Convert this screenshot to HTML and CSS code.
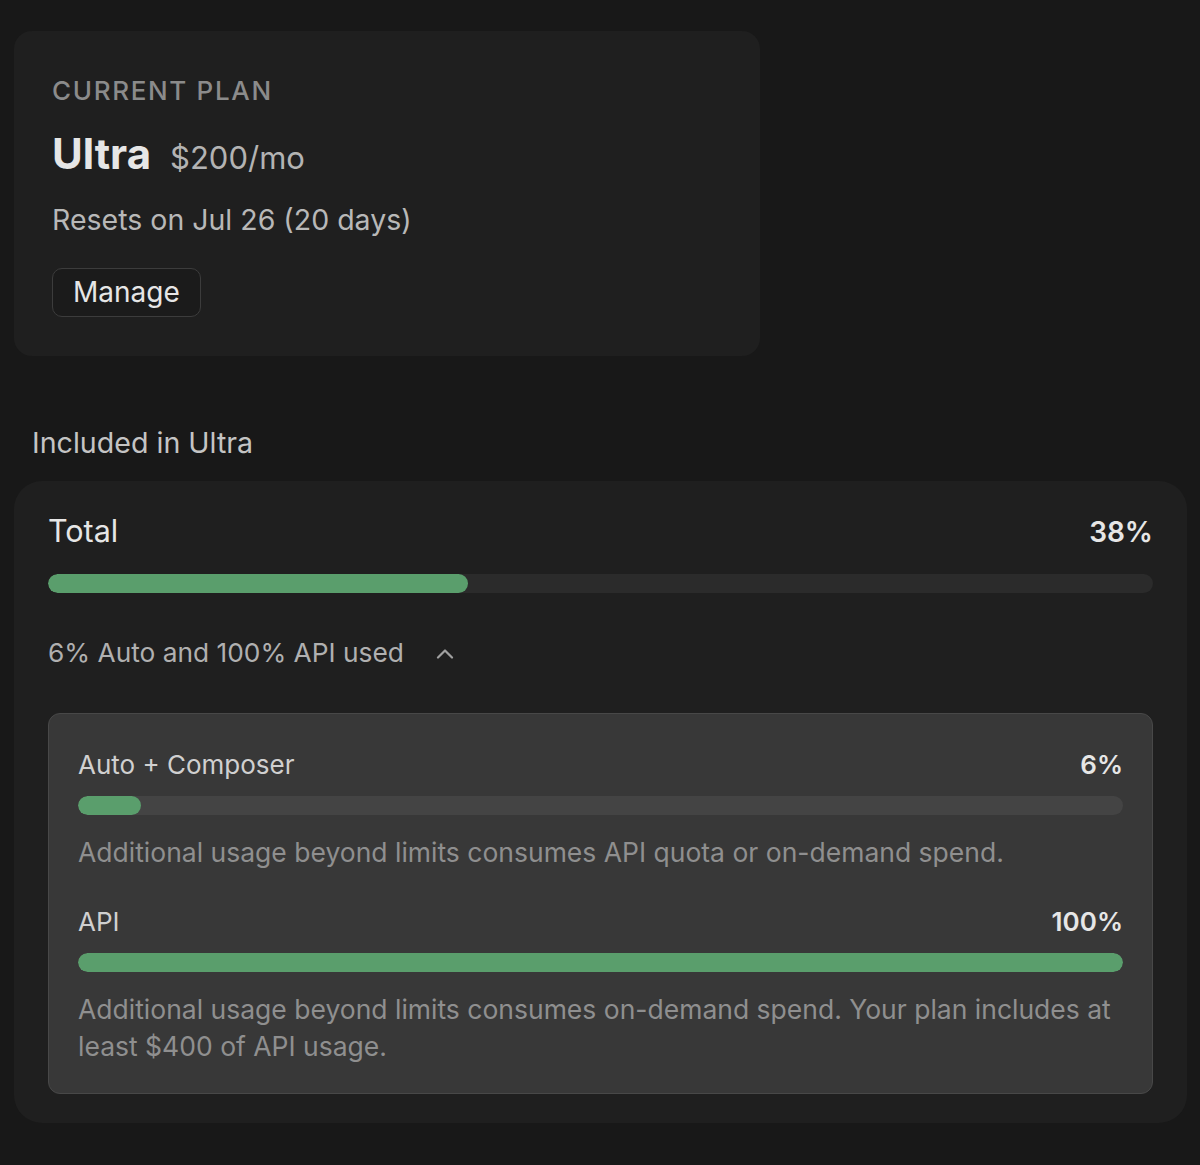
FILE: index.html
```html
<!DOCTYPE html>
<html lang="en">
<head>
  <meta charset="UTF-8" />
  <meta name="viewport" content="width=device-width, initial-scale=1" />
  <title>Usage</title>
  <link rel="stylesheet" href="styles.css">
</head>
<body>
  <main class="page">
    <section class="plan-card">
      <div class="plan-label">CURRENT PLAN</div>
      <div class="plan-title">
        <span class="plan-name">Ultra</span>
        <span class="plan-price">$200/mo</span>
      </div>
      <p class="plan-reset">Resets on Jul 26 (20 days)</p>
      <button class="manage-btn">Manage</button>
    </section>

    <h2 class="section-title">Included in Ultra</h2>

    <section class="usage-card">
      <div class="usage-head">
        <span class="usage-name">Total</span>
        <span class="usage-pct">38%</span>
      </div>
      <div class="bar"><div class="bar-fill" style="width: 38%"></div></div>

      <button class="breakdown-toggle">
        <span>6% Auto and 100% API used</span>
        <svg class="chevron" width="18" height="11" viewBox="0 0 18 11" fill="none">
          <path d="M2 9.5 L9 2.5 L16 9.5" stroke="currentColor" stroke-width="2.2" stroke-linecap="round" stroke-linejoin="round"/>
        </svg>
      </button>

      <div class="breakdown">
        <div class="meter">
          <div class="meter-head">
            <span>Auto + Composer</span>
            <span class="meter-pct">6%</span>
          </div>
          <div class="bar bar-inner"><div class="bar-fill" style="width: 6%"></div></div>
          <p class="meter-note">Additional usage beyond limits consumes API quota or on-demand spend.</p>
        </div>
        <div class="meter">
          <div class="meter-head">
            <span>API</span>
            <span class="meter-pct">100%</span>
          </div>
          <div class="bar bar-inner"><div class="bar-fill" style="width: 100%"></div></div>
          <p class="meter-note">Additional usage beyond limits consumes on-demand spend. Your plan includes at least $400 of API usage.</p>
        </div>
      </div>
    </section>
  </main>
</body>
</html>
```

FILE: styles.css
```css
html, body {
  margin: 0;
  padding: 0;
  background: #181818;
  color: #e4e4e4;
  font-family: Inter, "Noto Sans", sans-serif;
}

.page {
  padding: 31px 13px 40px 14px;
}

.plan-card {
  width: 746px;
  box-sizing: border-box;
  background: #1f1f1f;
  border-radius: 18px;
  padding: 44px 38px 39px 38px;
}

.plan-label {
  font-size: 26px;
  line-height: 32px;
  letter-spacing: 0.064em;
  color: #8b8b8b;
  font-weight: 500;
}

.plan-title {
  display: flex;
  align-items: baseline;
  gap: 19px;
  margin-top: 21px;
}

.plan-name {
  font-size: 42px;
  line-height: 52px;
  font-weight: 700;
  color: #e6e6e6;
}

.plan-price {
  font-size: 31px;
  color: #b3b3b3;
}

.plan-reset {
  margin: 22px 0 0;
  font-size: 28.5px;
  line-height: 36px;
  color: #b8b8b8;
}

.manage-btn {
  display: block;
  margin-top: 30px;
  height: 49px;
  padding: 0 20px;
  background: #1b1b1b;
  border: 1px solid #3c3c3c;
  border-radius: 10px;
  color: #e6e6e6;
  font-family: inherit;
  font-size: 28px;
  line-height: 47px;
  cursor: pointer;
}

.section-title {
  margin: 69px 0 20px 18px;
  font-size: 28.6px;
  line-height: 36px;
  font-weight: 400;
  color: #c4c4c4;
}

.usage-card {
  background: #1f1f1f;
  border-radius: 28px;
  padding: 31px 34px 29px 34px;
}

.usage-head,
.meter-head {
  display: flex;
  justify-content: space-between;
  align-items: baseline;
}

.usage-name {
  font-size: 30.5px;
  line-height: 38px;
  color: #e6e6e6;
}

.usage-pct {
  font-size: 28px;
  font-weight: 600;
  color: #e6e6e6;
}

.bar {
  height: 19px;
  border-radius: 10px;
  background: #2b2b2b;
  overflow: hidden;
  margin-top: 24px;
}

.bar-inner {
  background: #444444;
  margin-top: 15px;
}

.bar-fill {
  height: 100%;
  border-radius: 10px;
  background: #5a9e6c;
}

.breakdown-toggle {
  display: flex;
  align-items: center;
  gap: 32px;
  margin-top: 43px;
  padding: 0;
  border: none;
  background: none;
  color: #b0b0b0;
  font-family: inherit;
  font-size: 26.3px;
  line-height: 34px;
  cursor: pointer;
}

.chevron {
  color: #a0a0a0;
}

.breakdown {
  margin-top: 43px;
  background: #383838;
  border: 1px solid #484848;
  border-radius: 12px;
  padding: 35px 29px 28px 29px;
}

.meter + .meter {
  margin-top: 35px;
}

.meter-head {
  font-size: 26px;
  line-height: 32px;
  color: #d0d0d0;
}

.meter-pct {
  font-weight: 600;
  color: #e6e6e6;
}

.meter-note {
  margin: 19px 0 0;
  font-size: 26.5px;
  line-height: 37px;
  color: #8f8f8f;
}
```
